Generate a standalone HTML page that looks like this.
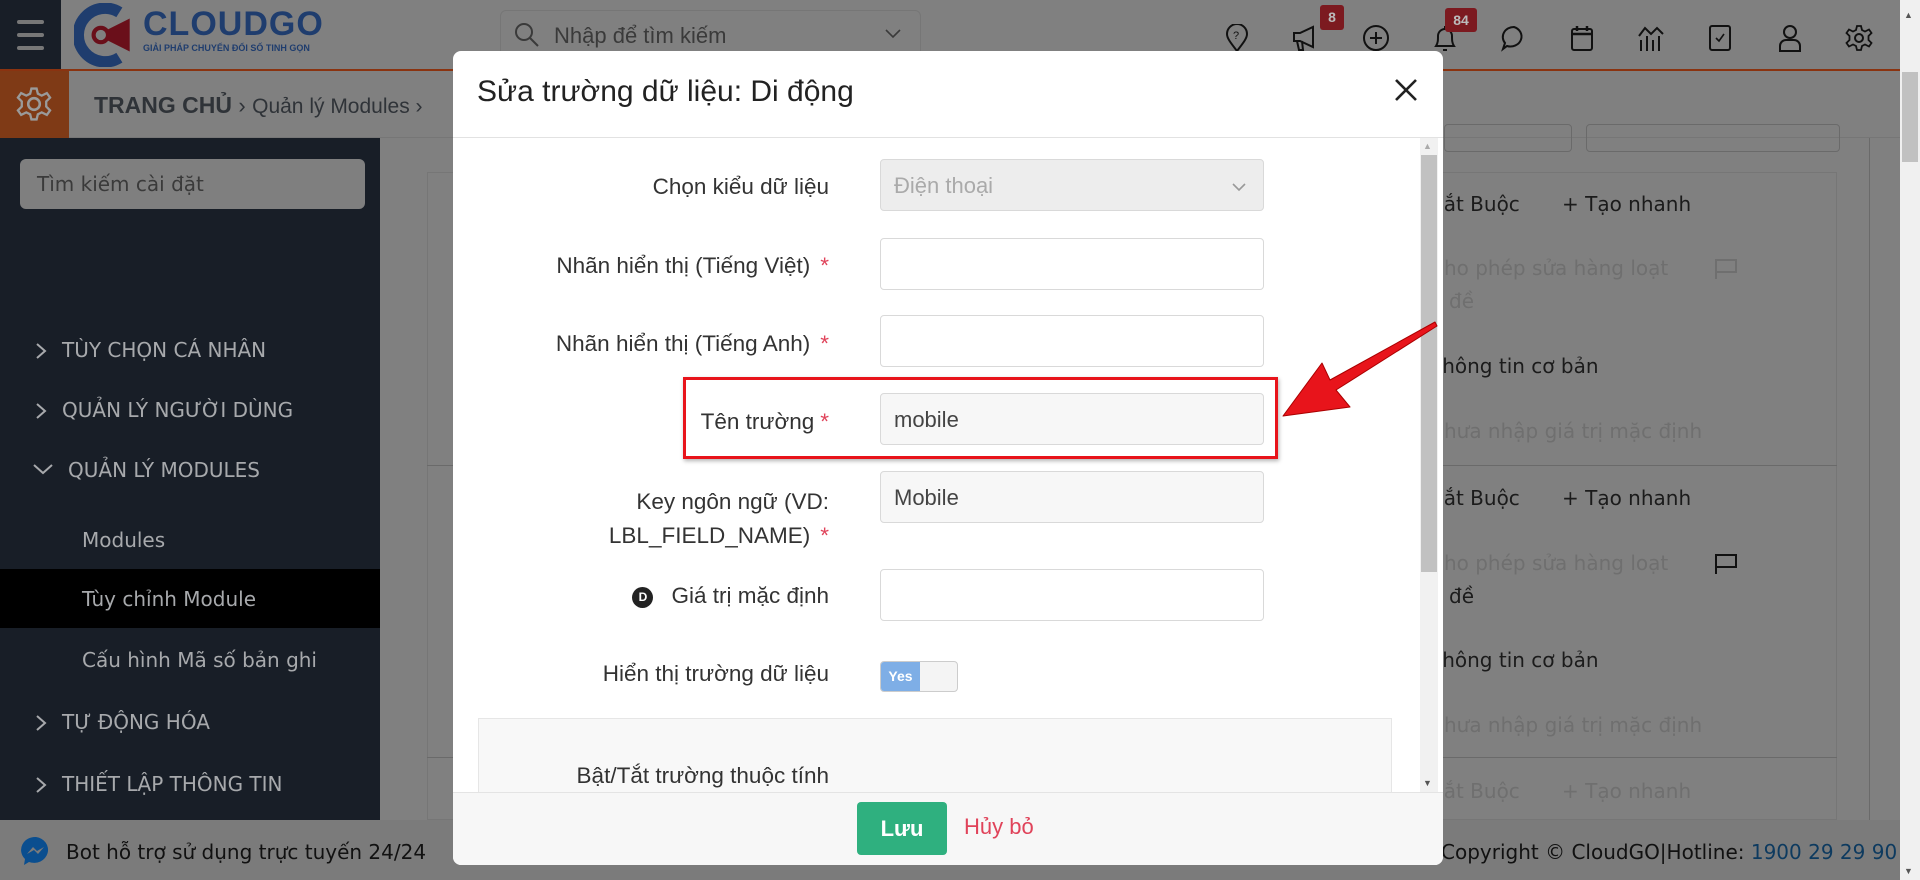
<!DOCTYPE html>
<html><head><meta charset="utf-8"><style>
*{box-sizing:border-box;margin:0;padding:0}
body{width:1920px;height:880px;overflow:hidden;position:relative;background:#808080;font-family:"Liberation Sans","DejaVu Sans",sans-serif}
.abs{position:absolute}
.side{font-family:"DejaVu Sans",sans-serif}
.sb{left:0;top:138px;width:380px;height:682px;background:#181e27}
.item{position:absolute;left:62px;color:#a7a9ac;font-size:20px;font-family:"DejaVu Sans",sans-serif;white-space:nowrap}
.chev{position:absolute;left:34px}
.sub{position:absolute;left:82px;color:#a7a9ac;font-size:20px;font-family:"DejaVu Sans",sans-serif;white-space:nowrap}
.rt{position:absolute;font-family:"DejaVu Sans",sans-serif;font-size:20px;white-space:nowrap;color:#1b1b1b}
.rg{color:#6f6f6f}
.modal{left:453px;top:51px;width:990px;height:814px;background:#fff;border-radius:8px;overflow:hidden}
.lbl{position:absolute;right:614px;font-size:22.5px;color:#333;text-align:right;white-space:nowrap}
.star{color:#e0435a;margin-left:10px}
.inp{position:absolute;left:427px;width:384px;height:52px;border:1px solid #d9d9d9;border-radius:4px;background:#fff;font-size:22px;color:#444;padding:13px 13px}
.ro{background:#f7f7f7}
.ic{position:absolute;top:24px}
</style></head><body>
<!-- top bar -->
<div class="abs" style="left:0;top:0;width:61px;height:70px;background:#181e27"></div>
<div class="abs" style="left:17px;top:20px;width:27px;height:4px;background:#777;border-radius:2px"></div>
<div class="abs" style="left:17px;top:33px;width:27px;height:4px;background:#777;border-radius:2px"></div>
<div class="abs" style="left:17px;top:46px;width:27px;height:4px;background:#777;border-radius:2px"></div>
<svg class="abs" style="left:74px;top:3px" width="66" height="64" viewBox="0 0 64 60"><path d="M44 8 A26 26 0 1 0 44 52" fill="none" stroke="#1f3d6e" stroke-width="11"/><path d="M22 30 L54 14 L54 46 Z" fill="#6a0f1a"/><circle cx="26" cy="30" r="7" fill="#808080" stroke="#6a0f1a" stroke-width="4"/></svg>
<div class="abs" style="left:143px;top:5px;font-size:34px;font-weight:bold;color:#1f3d6e;letter-spacing:1px">CLOUDGO</div>
<div class="abs" style="left:143px;top:43px;font-size:9px;font-weight:bold;color:#1f3d6e">GIẢI PHÁP CHUYỂN ĐỔI SỐ TINH GỌN</div>
<div class="abs" style="left:500px;top:10px;width:421px;height:51px;border:1px solid #767676;border-radius:6px"></div>
<svg class="abs" style="left:514px;top:22px" width="26" height="26" viewBox="0 0 26 26"><circle cx="10" cy="10" r="8" fill="none" stroke="#3a3a3a" stroke-width="2"/><path d="M16 16 L24 24" stroke="#3a3a3a" stroke-width="2"/></svg>
<div class="abs" style="left:554px;top:23px;font-size:22px;color:#3a3a3a">Nhập để tìm kiếm</div>
<svg class="abs" style="left:884px;top:28px" width="18" height="12"><path d="M2 2 L9 9 L16 2" fill="none" stroke="#3a3a3a" stroke-width="1.6"/></svg>
<!-- icons -->
<svg class="abs ic" style="left:1225px" width="24" height="28" viewBox="0 0 24 28"><path d="M12 27 C5 18 2 14 2 10 A10 10 0 0 1 22 10 C22 14 19 18 12 27Z" fill="none" stroke="#111" stroke-width="2"/><text x="8" y="15" font-size="11" fill="#111" font-family="Liberation Sans">?</text></svg>
<svg class="abs ic" style="left:1291px" width="28" height="28" viewBox="0 0 28 28"><path d="M3 9 H9 L22 3 V23 L9 17 H3 Z M6 17 L8 26 H12 L11 17" fill="none" stroke="#111" stroke-width="2"/></svg>
<svg class="abs ic" style="left:1362px" width="28" height="28" viewBox="0 0 28 28"><circle cx="14" cy="14" r="12" fill="none" stroke="#111" stroke-width="2"/><path d="M14 8V20M8 14H20" stroke="#111" stroke-width="2"/></svg>
<svg class="abs ic" style="left:1432px" width="26" height="30" viewBox="0 0 26 30"><path d="M4 22 C6 19 6 16 6 12 A7 7 0 0 1 20 12 C20 16 20 19 22 22 Z M11 26 H15" fill="none" stroke="#111" stroke-width="2"/><path d="M13 2V5" stroke="#111" stroke-width="2"/></svg>
<svg class="abs ic" style="left:1500px" width="28" height="28" viewBox="0 0 28 28"><path d="M14 3 A11 10 0 1 1 7 22 L3 25 L5 19 A11 10 0 0 1 14 3Z" fill="none" stroke="#111" stroke-width="2"/></svg>
<svg class="abs ic" style="left:1570px" width="24" height="28" viewBox="0 0 24 28"><rect x="2" y="5" width="20" height="21" rx="2" fill="none" stroke="#111" stroke-width="2"/><path d="M2 10H22M7 2V7M17 2V7" stroke="#111" stroke-width="2.5"/></svg>
<svg class="abs ic" style="left:1637px" width="28" height="28" viewBox="0 0 28 28"><path d="M2 12 L8 4 L14 10 L20 4 L26 10" fill="none" stroke="#111" stroke-width="2"/><path d="M4 16V27M10 12V27M16 16V27M22 12V27" stroke="#111" stroke-width="2"/></svg>
<svg class="abs ic" style="left:1707px" width="26" height="28" viewBox="0 0 26 28"><rect x="3" y="2" width="20" height="24" rx="2" fill="none" stroke="#111" stroke-width="2"/><path d="M9 14 L12 17 L17 10" fill="none" stroke="#111" stroke-width="1.6"/></svg>
<svg class="abs ic" style="left:1777px" width="26" height="28" viewBox="0 0 26 28"><circle cx="13" cy="8" r="6" fill="none" stroke="#111" stroke-width="2"/><path d="M3 27 V22 A6 6 0 0 1 9 16 H17 A6 6 0 0 1 23 22 V27 Z" fill="none" stroke="#111" stroke-width="2"/></svg>
<svg class="abs ic" style="left:1845px" width="28" height="28" viewBox="0 0 28 28"><circle cx="14" cy="14" r="4" fill="none" stroke="#111" stroke-width="2"/><path d="M12 2H16L17 6L20 7.5L24 5.5L26.5 9L23.5 12V16L26.5 19L24 22.5L20 20.5L17 22L16 26H12L11 22L8 20.5L4 22.5L1.5 19L4.5 16V12L1.5 9L4 5.5L8 7.5L11 6Z" fill="none" stroke="#111" stroke-width="1.8"/></svg>
<div class="abs" style="left:1320px;top:5px;width:24px;height:25px;background:#7c1a20;border-radius:3px;color:#bbb;font-size:14px;font-weight:bold;text-align:center;line-height:25px">8</div>
<div class="abs" style="left:1445px;top:8px;width:32px;height:24px;background:#7c1a20;border-radius:3px;color:#bbb;font-size:14px;font-weight:bold;text-align:center;line-height:24px">84</div>
<div class="abs" style="left:0;top:69px;width:1900px;height:2px;background:#8a3310"></div>
<!-- breadcrumb -->
<div class="abs" style="left:0;top:71px;width:69px;height:67px;background:#7f3a16"></div>
<svg class="abs" style="left:16px;top:86px" width="36" height="36" viewBox="0 0 28 28"><circle cx="14" cy="14" r="4.5" fill="none" stroke="#9a9a9a" stroke-width="2"/><path d="M12 2H16L17 6L20 7.5L24 5.5L26.5 9L23.5 12V16L26.5 19L24 22.5L20 20.5L17 22L16 26H12L11 22L8 20.5L4 22.5L1.5 19L4.5 16V12L1.5 9L4 5.5L8 7.5L11 6Z" fill="none" stroke="#9a9a9a" stroke-width="1.8"/></svg>
<div class="abs" style="left:94px;top:92px;font-size:23px;color:#2f3338;font-weight:bold;white-space:nowrap">TRANG CHỦ <span style="font-weight:normal;font-size:22px">›</span> <span style="font-weight:normal;font-size:21px">Quản lý Modules ›</span></div>
<div class="abs" style="left:69px;top:137px;width:1831px;height:1px;background:#767676"></div>
<!-- sidebar -->
<div class="abs sb"></div>
<div class="abs side" style="left:20px;top:159px;width:345px;height:50px;background:#7f7f7f;border-radius:6px;color:#3a3a3a;font-size:20px;padding:13px 17px">Tìm kiếm cài đặt</div>
<svg class="chev" style="top:341px" width="14" height="20"><path d="M3 3L11 10L3 17" fill="none" stroke="#a7a9ac" stroke-width="2"/></svg>
<div class="item" style="top:338px">TÙY CHỌN CÁ NHÂN</div>
<svg class="chev" style="top:401px" width="14" height="20"><path d="M3 3L11 10L3 17" fill="none" stroke="#a7a9ac" stroke-width="2"/></svg>
<div class="item" style="top:398px">QUẢN LÝ NGƯỜI DÙNG</div>
<svg class="chev" style="top:462px;left:32px" width="22" height="14"><path d="M2 3L11 11L20 3" fill="none" stroke="#a7a9ac" stroke-width="2"/></svg>
<div class="item" style="top:458px;left:68px">QUẢN LÝ MODULES</div>
<div class="sub" style="top:528px">Modules</div>
<div class="abs" style="left:0;top:569px;width:380px;height:59px;background:#000"></div>
<div class="sub" style="top:587px">Tùy chỉnh Module</div>
<div class="sub" style="top:648px">Cấu hình Mã số bản ghi</div>
<svg class="chev" style="top:713px" width="14" height="20"><path d="M3 3L11 10L3 17" fill="none" stroke="#a7a9ac" stroke-width="2"/></svg>
<div class="item" style="top:710px">TỰ ĐỘNG HÓA</div>
<svg class="chev" style="top:775px" width="14" height="20"><path d="M3 3L11 10L3 17" fill="none" stroke="#a7a9ac" stroke-width="2"/></svg>
<div class="item" style="top:772px">THIẾT LẬP THÔNG TIN</div>
<!-- right bg content -->
<div class="abs" style="left:427px;top:172px;width:1410px;height:648px;border:1px solid #767676"></div>
<div class="abs" style="left:1444px;top:124px;width:128px;height:28px;border:1px solid #6a6a6a;border-radius:4px"></div>
<div class="abs" style="left:1586px;top:124px;width:254px;height:28px;border:1px solid #6a6a6a;border-radius:4px"></div>
<div class="abs" style="left:427px;top:465px;width:1410px;height:1px;background:#6a6a6a"></div>
<div class="abs" style="left:427px;top:757px;width:1410px;height:1px;background:#6a6a6a"></div>
<div class="abs" style="left:1869px;top:138px;width:1px;height:682px;background:#6a6a6a"></div>
<div class="rt" style="left:1430px;top:192px">Bắt Buộc</div><div class="rt" style="left:1562px;top:192px">+ Tạo nhanh</div>
<div class="rt rg" style="left:1430px;top:256px">Cho phép sửa hàng loạt</div>
<svg class="abs" style="left:1714px;top:258px" width="24" height="22"><path d="M2 21V2H22V14H2" fill="none" stroke="#6f6f6f" stroke-width="2"/></svg>
<div class="rt rg" style="left:1430px;top:289px">u đề</div>
<div class="rt" style="left:1430px;top:354px">Thông tin cơ bản</div>
<div class="rt rg" style="left:1430px;top:419px">Chưa nhập giá trị mặc định</div>
<div class="rt" style="left:1430px;top:486px">Bắt Buộc</div><div class="rt" style="left:1562px;top:486px">+ Tạo nhanh</div>
<div class="rt rg" style="left:1430px;top:551px">Cho phép sửa hàng loạt</div>
<svg class="abs" style="left:1714px;top:553px" width="24" height="22"><path d="M2 21V2H22V14H2" fill="none" stroke="#111" stroke-width="2"/></svg>
<div class="rt" style="left:1430px;top:584px">u đề</div>
<div class="rt" style="left:1430px;top:648px">Thông tin cơ bản</div>
<div class="rt rg" style="left:1430px;top:713px">Chưa nhập giá trị mặc định</div>
<div class="rt rg" style="left:1430px;top:779px">Bắt Buộc</div><div class="rt rg" style="left:1562px;top:779px">+ Tạo nhanh</div>
<!-- bottom bar -->
<div class="abs" style="left:0;top:820px;width:1900px;height:60px;background:#7b7b7b"></div>
<svg class="abs" style="left:20px;top:835px" width="32" height="32" viewBox="0 0 32 32"><path d="M16 2 A14 13 0 1 1 9 27 L4 30 L5 24 A14 13 0 0 1 16 2Z" fill="#0a4e8f"/><path d="M7 19 L13 12 L17 16 L24 12 L18 19 L14 15Z" fill="#7b7b7b"/></svg>
<div class="abs side" style="left:66px;top:840px;font-size:20px;color:#111">Bot hỗ trợ sử dụng trực tuyến 24/24</div>
<div class="abs side" style="left:1441px;top:840px;font-size:20px;color:#111;white-space:nowrap">Copyright © CloudGO|Hotline: <span style="color:#0d3a5f">1900 29 29 90</span></div>
<!-- page scrollbar -->
<div class="abs" style="left:1900px;top:0;width:20px;height:880px;background:#f0f0f0"></div>
<div class="abs" style="left:1902px;top:72px;width:16px;height:90px;background:#c1c1c1"></div>
<div class="abs" style="left:1904px;top:10px;font-size:9px;color:#555">▲</div>
<div class="abs" style="left:1904px;top:866px;font-size:9px;color:#555">▼</div>
<!-- modal -->
<div class="abs modal">
  <div class="abs" style="left:24px;top:24px;font-size:30px;color:#222;white-space:nowrap">Sửa trường dữ liệu: Di động</div>
  <svg class="abs" style="left:941px;top:27px" width="24" height="24"><path d="M2 2L22 22M22 2L2 22" stroke="#222" stroke-width="2.6"/></svg>
  <div class="abs" style="left:0;top:86px;width:990px;height:1px;background:#e2e2e2"></div>
  <div class="lbl" style="top:123px">Chọn kiểu dữ liệu</div>
  <div class="inp ro" style="top:108px;background:#ededed;color:#aaa">Điện thoại<svg style="position:absolute;right:16px;top:22px" width="16" height="10"><path d="M2 2L8 8L14 2" fill="none" stroke="#999" stroke-width="1.6"/></svg></div>
  <div class="lbl" style="top:202px">Nhãn hiển thị (Tiếng Việt)<span class="star">*</span></div>
  <div class="inp" style="top:187px"></div>
  <div class="lbl" style="top:280px">Nhãn hiển thị (Tiếng Anh)<span class="star">*</span></div>
  <div class="inp" style="top:264px"></div>
  <div class="lbl" style="top:358px">Tên trường<span class="star" style="margin-left:6px">*</span></div>
  <div class="inp ro" style="top:342px">mobile</div>
  <div class="abs" style="left:230px;top:326px;width:595px;height:82px;border:3px solid #e8141b;box-shadow:1px 2px 4px rgba(0,0,0,.3)"></div>
  <div class="lbl" style="top:434px;line-height:34px">Key ngôn ngữ (VD:<br>LBL_FIELD_NAME)<span class="star">*</span></div>
  <div class="inp ro" style="top:420px">Mobile</div>
  <div class="lbl" style="top:532px"><span style="display:inline-block;width:21px;height:21px;border-radius:50%;background:#222;color:#fff;font-size:12px;font-weight:bold;text-align:center;line-height:21px;vertical-align:2px;margin-right:18px">D</span>Giá trị mặc định</div>
  <div class="inp" style="top:518px"></div>
  <div class="lbl" style="top:610px">Hiển thị trường dữ liệu</div>
  <div class="abs" style="left:427px;top:610px;width:78px;height:31px;border:1px solid #ccc;border-radius:4px;background:#f4f4f4;overflow:hidden"><div style="width:39px;height:100%;background:#7eaee6;color:#fff;font-size:14px;font-weight:bold;text-align:center;line-height:29px">Yes</div></div>
  <div class="abs" style="left:25px;top:667px;width:914px;height:160px;background:#f8f8f8;border:1px solid #e6e6e6"></div>
  <div class="lbl" style="top:712px">Bật/Tắt trường thuộc tính</div>
  <!-- modal scrollbar -->
  <div class="abs" style="left:967px;top:87px;width:18px;height:654px;background:#f1f1f1"></div>
  <div class="abs" style="left:968px;top:104px;width:16px;height:417px;background:#c1c1c1"></div>
  <div class="abs" style="left:970px;top:90px;font-size:9px;color:#aaa">▲</div>
  <div class="abs" style="left:970px;top:727px;font-size:9px;color:#555">▼</div>
  <div class="abs" style="left:0;top:741px;width:990px;height:73px;background:#f7f7f7;border-top:1px solid #e4e4e4"></div>
  <div class="abs" style="left:404px;top:751px;width:90px;height:53px;background:#2fb07f;border-radius:4px;color:#fff;font-size:22px;font-weight:bold;text-align:center;line-height:53px">Lưu</div>
  <div class="abs" style="left:511px;top:763px;font-size:22px;color:#e0435a">Hủy bỏ</div>
</div>
<!-- red arrow -->
<svg class="abs" style="left:1270px;top:310px" width="180" height="115" viewBox="0 0 180 115"><path d="M13 106 L52 53 L60 70 L165 12 L167 16 L66 80 L80 97 Z" fill="#e8141b" stroke="#a00" stroke-width="1" stroke-linejoin="round"/></svg>
</body></html>
